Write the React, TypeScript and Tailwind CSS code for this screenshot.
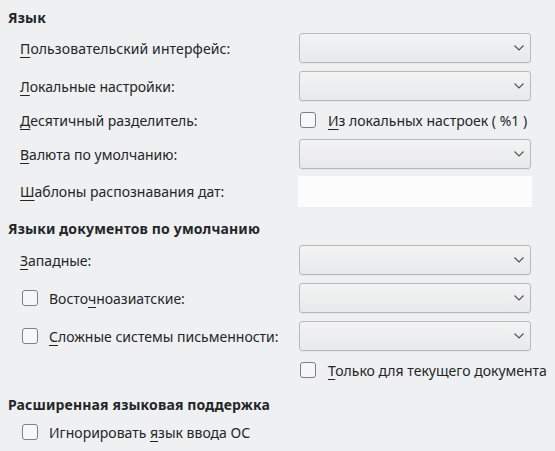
import type { ReactNode } from 'react';

function Chevron() {
  return (
    <svg width="10" height="6" viewBox="0 0 10 6" className="text-[#4d4f52]">
      <path d="M0.5 0.5 L5 5 L9.5 0.5" fill="none" stroke="currentColor" strokeWidth="1.1" />
    </svg>
  );
}

function Combo() {
  return (
    <div className="w-[232px] h-[30px] flex items-center justify-end pr-[6px] rounded-[3px] border border-[#b7b9bb] bg-gradient-to-b from-[#f3f3f4] to-[#e8e9ea] shadow-[0_1px_0_rgba(0,0,0,0.04)]">
      <Chevron />
    </div>
  );
}

function Box() {
  return <div className="w-4 h-4 shrink-0 rounded-[3px] border border-[#7e8083] bg-[#f7f7f7]" />;
}

function M({ children }: { children: ReactNode }) {
  return <span className="underline underline-offset-[3px] decoration-1">{children}</span>;
}

function Header({ children, className }: { children: ReactNode; className: string }) {
  return <div className={`pl-2 h-5 leading-5 font-bold tracking-[0.15px] ${className}`}>{children}</div>;
}

function Row({ label, children, className }: { label: ReactNode; children: ReactNode; className: string }) {
  return (
    <div className={`flex items-center ${className}`}>
      <div className="w-[299px] shrink-0 flex items-center">{label}</div>
      {children}
    </div>
  );
}

export default function App() {
  return (
    <div className="w-[555px] h-[451px] overflow-hidden bg-[#eff0f1] text-[#232629] text-[14px] font-['Noto_Sans',sans-serif] pt-2">
      {/* Язык */}
      <Header className="">Язык</Header>
      <Row className="mt-[5px] h-[30px]" label={<span className="pl-5 tracking-[0.1px]"><M>П</M>ользовательский интерфейс:</span>}>
        <Combo />
      </Row>
      <Row className="mt-2 h-[30px]" label={<span className="pl-5"><M>Л</M>окальные настройки:</span>}>
        <Combo />
      </Row>
      <Row className="mt-2 h-[22px]" label={<span className="pl-5"><M>Д</M>есятичный разделитель:</span>}>
        <div className="flex items-center gap-3 pl-px">
          <Box />
          <span><M>И</M>з локальных настроек ( %1 )</span>
        </div>
      </Row>
      <Row className="mt-2 h-[30px]" label={<span className="pl-5"><M>В</M>алюта по умолчанию:</span>}>
        <Combo />
      </Row>
      <Row className="mt-[7px] h-[31px]" label={<span className="pl-5"><M>Ш</M>аблоны распознавания дат:</span>}>
        <div className="w-[234px] h-[31px] -ml-px bg-[#fcfcfc]" />
      </Row>

      {/* Языки документов */}
      <Header className="mt-3">Языки документов по умолчанию</Header>
      <Row className="mt-[6px] h-[30px]" label={<span className="pl-5"><M>З</M>ападные:</span>}>
        <Combo />
      </Row>
      <Row
        className="mt-2 h-[30px]"
        label={
          <div className="pl-[22px] flex items-center gap-[11px]">
            <Box />
            <span>Восто<M>ч</M>ноазиатские:</span>
          </div>
        }
      >
        <Combo />
      </Row>
      <Row
        className="mt-2 h-[30px]"
        label={
          <div className="pl-[22px] flex items-center gap-[11px]">
            <Box />
            <span><M>С</M>ложные системы письменности:</span>
          </div>
        }
      >
        <Combo />
      </Row>
      <Row className="mt-2 h-[22px]" label={null}>
        <div className="flex items-center gap-3 pl-px">
          <Box />
          <span><M>Т</M>олько для текущего документа</span>
        </div>
      </Row>

      {/* Расширенная */}
      <Header className="mt-[14px]">Расширенная языковая поддержка</Header>
      <div className="mt-[6px] h-[22px] pl-[22px] flex items-center gap-[11px]">
        <Box />
        <span>Игнорировать <M>я</M>зык ввода ОС</span>
      </div>
    </div>
  );
}
